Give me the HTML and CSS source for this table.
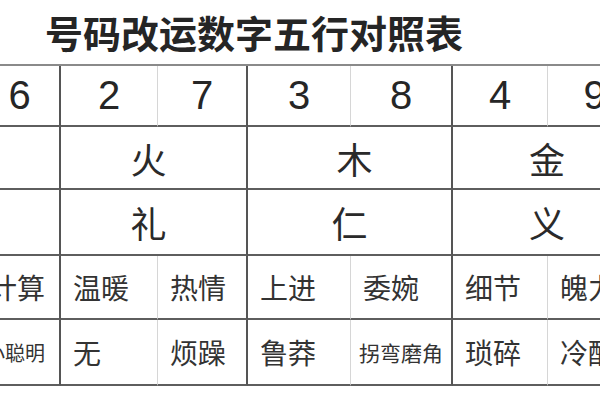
FILE: index.html
```html
<!DOCTYPE html>
<html lang="zh">
<head>
<meta charset="utf-8">
<link rel="stylesheet" href="styles.css">
</head>
<body>
<div class="page">
  <h1 class="title">号码改运数字五行对照表</h1>
  <div class="sheet">
    <div class="cell num b">6</div>
    <div class="cell num a">2</div>
    <div class="cell num b">7</div>
    <div class="cell num a">3</div>
    <div class="cell num b">8</div>
    <div class="cell num a">4</div>
    <div class="cell num b">9</div>

    <div class="cell big b"></div>
    <div class="cell big b span2 shift-l">火</div>
    <div class="cell big b span2 shift-r">木</div>
    <div class="cell big b span2">金</div>

    <div class="cell big b"></div>
    <div class="cell big b span2 shift-l">礼</div>
    <div class="cell big b span2">仁</div>
    <div class="cell big b span2">义</div>

    <div class="cell word first b">计算</div>
    <div class="cell word a">温暖</div>
    <div class="cell word b">热情</div>
    <div class="cell word a">上进</div>
    <div class="cell word b">委婉</div>
    <div class="cell word a">细节</div>
    <div class="cell word b">魄力</div>

    <div class="cell word first small b">小聪明</div>
    <div class="cell word a">无</div>
    <div class="cell word b">烦躁</div>
    <div class="cell word a">鲁莽</div>
    <div class="cell word small b">拐弯磨角</div>
    <div class="cell word a">琐碎</div>
    <div class="cell word b">冷酷</div>
  </div>
</div>
</body>
</html>
```

FILE: styles.css
```css
html, body {
  margin: 0;
  padding: 0;
  background: #ffffff;
}

.page {
  width: 600px;
  height: 400px;
  overflow: hidden;
  background: #ffffff;
  color: #2d2d2d;
  font-family: "Noto Sans CJK SC", "Noto Sans", sans-serif;
}

.title {
  margin: 0;
  height: 64px;
  line-height: 64px;
  padding-left: 45px;
  font-size: 38px;
  font-weight: 700;
  color: #252525;
  white-space: nowrap;
}

.sheet {
  display: grid;
  grid-template-columns: 81px 97px 90px 103px 102px 95px 95px;
  grid-template-rows: 61px 63px 66px 64px 66px;
  margin-left: -20px;
  width: 663px;
  border-top: 2px solid #8a8a8a;
}

.cell {
  box-sizing: border-box;
  display: flex;
  align-items: center;
  justify-content: center;
  border-bottom: 2px solid #5e5e5e;
  white-space: nowrap;
  overflow: hidden;
}

.cell.a {
  border-right: 1px solid #d6d6d6;
}

.cell.b {
  border-right: 2px solid #555555;
}

.span2 {
  grid-column: span 2;
}

.num {
  font-family: "Liberation Sans", "Noto Sans", sans-serif;
  font-size: 40px;
  color: #262626;
}

.big {
  font-size: 36px;
  color: #2a2a2a;
}

.shift-l {
  padding-right: 10px;
}

.shift-r {
  padding-left: 10px;
}

.word {
  justify-content: flex-start;
  padding-left: 12px;
  font-size: 28px;
  color: #333333;
}

.word.small {
  font-size: 21px;
  padding-left: 8px;
}

.word.first {
  justify-content: flex-end;
  padding-left: 0;
  padding-right: 14px;
}

.word.first.small {
  font-size: 20px;
}
```
